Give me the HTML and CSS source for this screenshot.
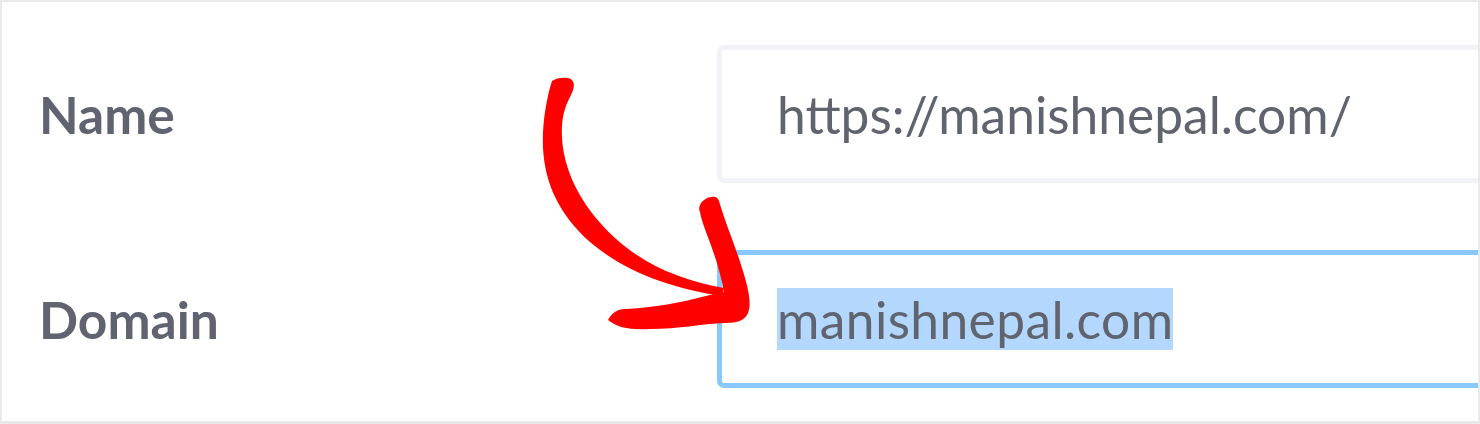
FILE: index.html
```html
<!DOCTYPE html>
<html lang="en">
<head>
<meta charset="utf-8">
<title>Site settings</title>
<link rel="stylesheet" href="styles.css">
</head>
<body>
<div class="page">
  <div class="frame">
    <div class="form">
      <div class="label">Name</div>
      <div class="field">https://manishnepal.com/</div>
      <div class="label">Domain</div>
      <div class="field field--focus"><span class="selected">manishnepal.com</span></div>
    </div>
  </div>
  <svg class="arrow" width="1480" height="424" viewBox="0 0 1480 424" aria-hidden="true">
    <path fill="#ff0000" d="M552,81 C546,100 542,125 543,148 C545,185 560,215 590,242 C625,272 670,288 722,296 L724,288 C680,280 645,265 615,238 C585,210 568,180 563,148 C560,125 563,110 570,97 C575,88 576,80 568,78 C562,77 556,78 552,81 Z"/>
    <path fill="#ff0000" d="M700,212 C697,206 703,198 711,197 C716,196 718,198 719,201 C725,222 735,245 742,268 C748,287 752,303 748,313 C745,320 738,323 725,323 C700,324 680,329 650,329 C630,330 618,328 608,320 C612,313 617,309 625,309 C650,308 680,303 710,295 L724,292 C720,270 713,250 706,232 C703,224 701,218 700,212 Z"/>
  </svg>
</div>
</body>
</html>
```

FILE: styles.css
```css
html, body {
  margin: 0;
  padding: 0;
  background: #ffffff;
}

.page {
  position: relative;
  width: 1480px;
  height: 424px;
  overflow: hidden;
}

.frame {
  box-sizing: border-box;
  width: 1480px;
  height: 424px;
  border: 2px solid #e9e9e9;
  border-bottom-width: 3px;
  background: #ffffff;
  overflow: hidden;
}

.form {
  display: grid;
  grid-template-columns: 678px 800px;
  grid-auto-rows: 138px;
  row-gap: 67px;
  padding: 43px 0 0 37px;
  font-family: Lato, "Open Sans", sans-serif;
}

.label {
  display: flex;
  align-items: center;
  font-size: 51.5px;
  font-weight: 700;
  color: #5f6470;
}

.field {
  box-sizing: border-box;
  display: flex;
  align-items: center;
  padding-left: 55px;
  border: 5px solid #f2f3f7;
  border-radius: 7px;
  font-size: 51.5px;
  font-weight: 400;
  color: #60646f;
  white-space: nowrap;
}

.field--focus {
  border-color: #89c8fc;
}

.selected {
  background: #b4d7fe;
  letter-spacing: 0.4px;
}

.arrow {
  position: absolute;
  top: 0;
  left: 0;
  pointer-events: none;
}
```
